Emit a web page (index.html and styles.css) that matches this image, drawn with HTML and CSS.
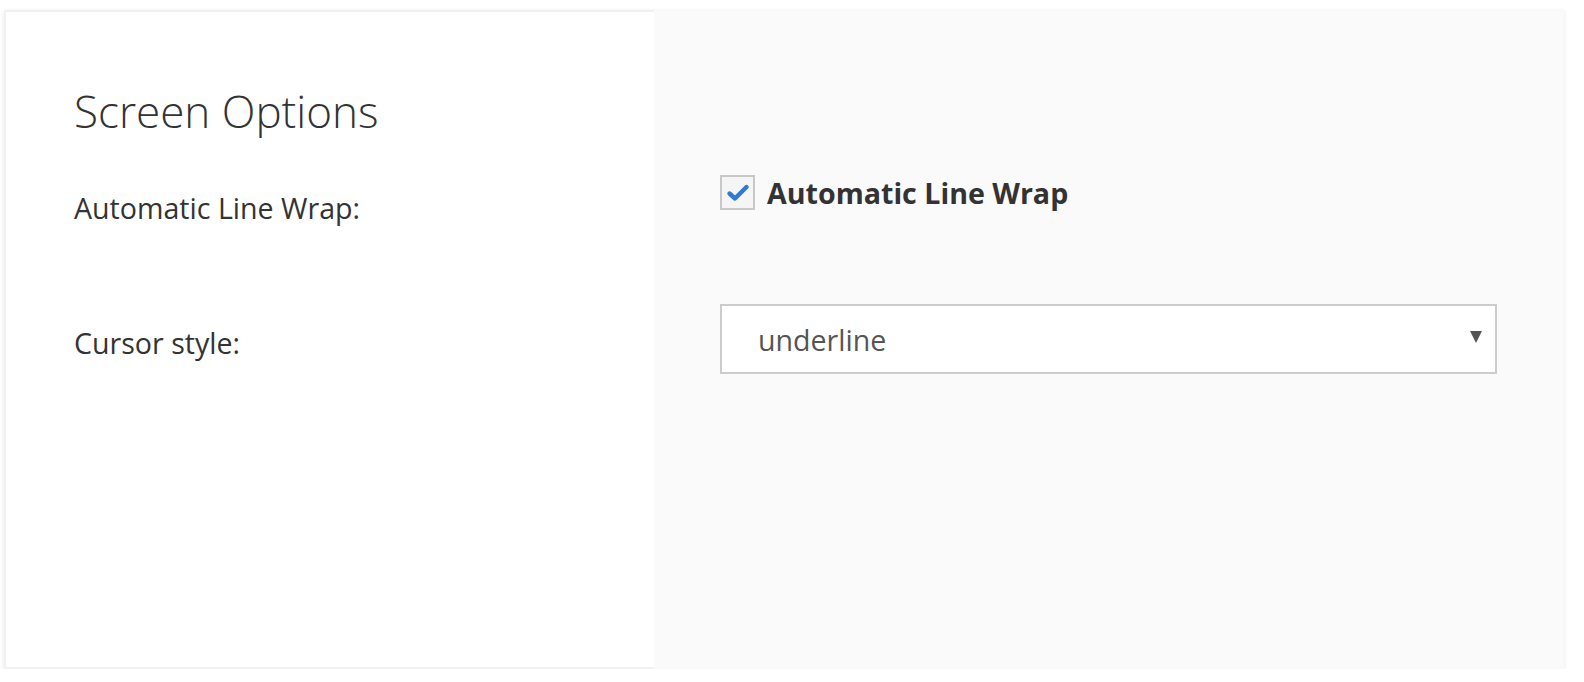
FILE: index.html
```html
<!DOCTYPE html>
<html>
<head>
<meta charset="utf-8">
<link rel="stylesheet" href="styles.css">
</head>
<body>
<div class="card">
  <div class="labels">
    <h1 class="title">Screen Options</h1>
    <div class="label label-wrap">Automatic Line Wrap:</div>
    <div class="label label-cursor">Cursor style:</div>
  </div>
  <div class="controls">
    <label class="check-row">
      <span class="checkbox">
        <svg width="26" height="26" viewBox="0 0 26 26"><path d="M4.5 13.5 L10 18.5 L21.5 7" fill="none" stroke="#2f7bd3" stroke-width="4.4" stroke-linecap="round" stroke-linejoin="round"/></svg>
      </span>
      <span class="check-label">Automatic Line Wrap</span>
    </label>
    <div class="select">
      <span class="select-value">underline</span>
      <span class="select-arrow"></span>
    </div>
  </div>
</div>
</body>
</html>
```
FILE: styles.css
```css
html, body {
  margin: 0;
  padding: 0;
  background: #fff;
}
body {
  font-family: "Open Sans", "Liberation Sans", sans-serif;
  color: #333;
}
.card {
  margin: 10px 0 0 4px;
  width: 1560px;
  height: 659px;
  display: flex;
  box-shadow: 0 1px 4px rgba(0, 0, 0, 0.1);
}
.labels {
  width: 650px;
  box-sizing: border-box;
  background: #fff;
  border: 2px solid #f1f1f1;
  border-right: none;
  padding: 69px 0 0 68px;
}
.title {
  margin: 0;
  font-size: 44px;
  font-weight: 300;
  line-height: 60px;
  color: #333;
}
.label {
  font-size: 28.6px;
  line-height: 40px;
  color: #333;
}
.label-wrap {
  margin-top: 47px;
}
.label-cursor {
  margin-top: 95px;
}
.controls {
  flex: 1;
  background: #fafafa;
  padding: 165px 0 0 66px;
}
.check-row {
  display: flex;
  align-items: center;
  height: 35px;
  gap: 12px;
}
.checkbox {
  width: 35px;
  height: 35px;
  box-sizing: border-box;
  border: 2px solid #c8c8c8;
  background: #f5f5f5;
  display: flex;
  align-items: center;
  justify-content: center;
}
.check-label {
  font-size: 28.6px;
  font-weight: 700;
  color: #333;
}
.select {
  margin-top: 94px;
  width: 777px;
  height: 70px;
  box-sizing: border-box;
  border: 2px solid #cccccc;
  background: #fff;
  display: flex;
  align-items: center;
  justify-content: space-between;
  padding: 0 13px 0 36px;
}
.select-value {
  font-size: 28.6px;
  color: #555;
}
.select-arrow {
  width: 0;
  height: 0;
  border-left: 6px solid transparent;
  border-right: 6px solid transparent;
  border-top: 12px solid #555;
  margin-top: -4px;
}
```
